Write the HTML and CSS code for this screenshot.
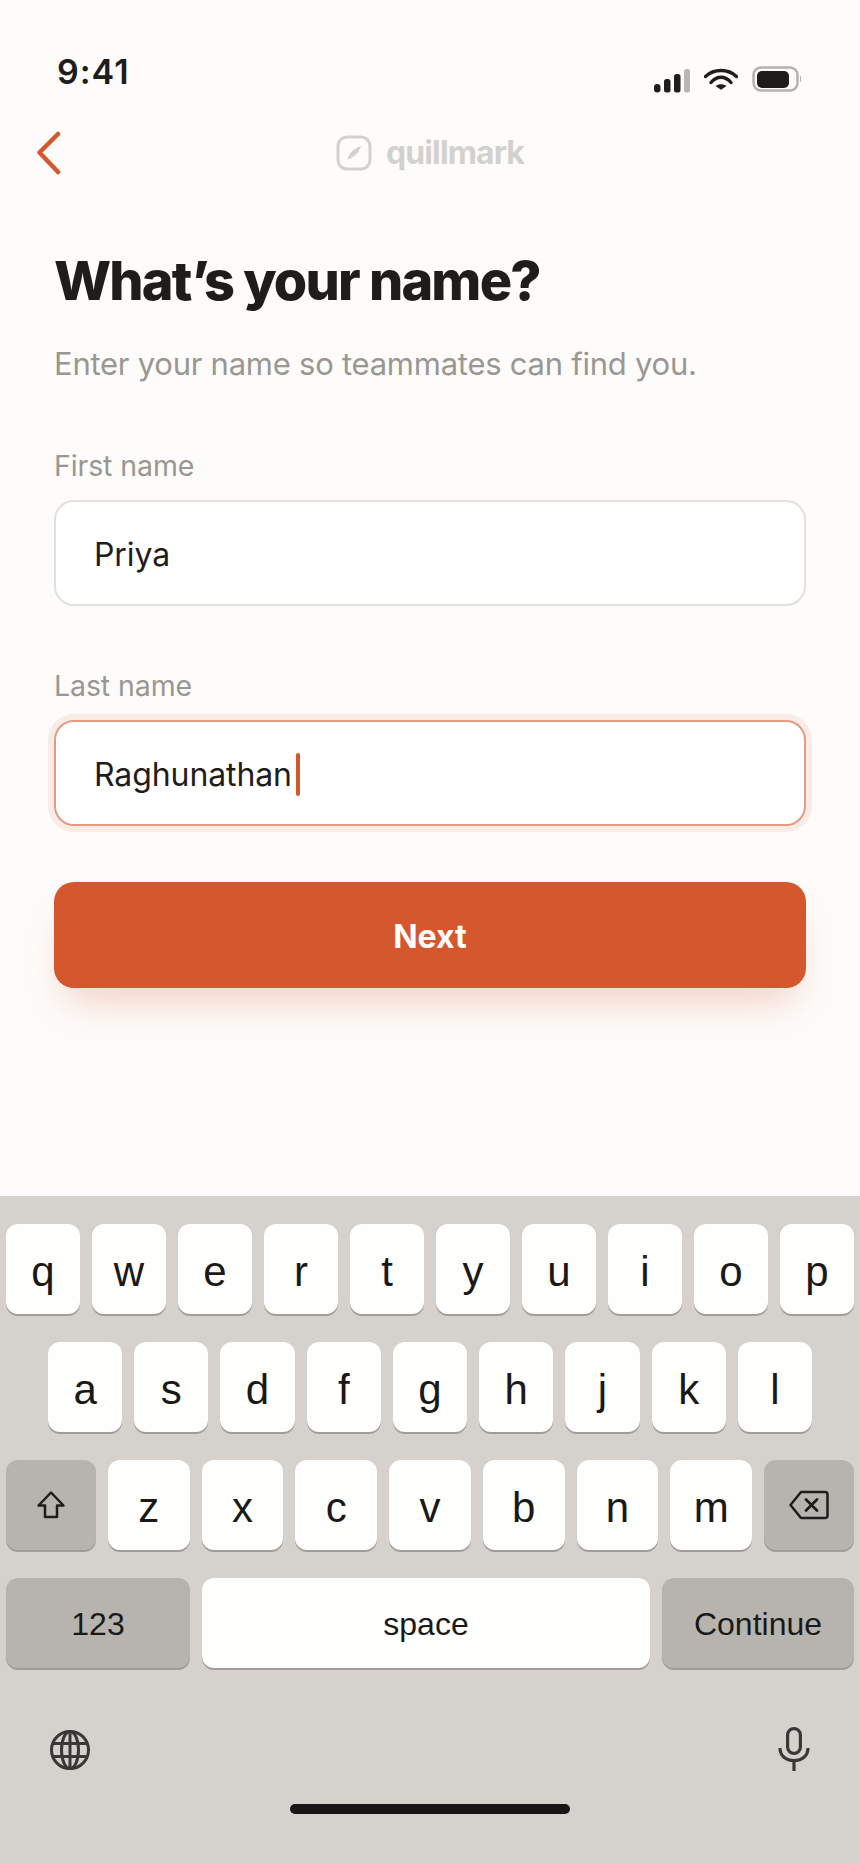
FILE: index.html
```html
<!DOCTYPE html>
<html lang="en">
<head>
    <meta charset="UTF-8">
    <meta name="viewport" content="width=device-width, initial-scale=1.0">
    <title>quillmark - What's your name?</title>
    <link rel="stylesheet" href="styles.css">
</head>
<body>
    <div class="screen">
        <div class="status-bar">
            <span class="time">9:41</span>
            <div class="status-icons">
                <svg width="36" height="24" viewBox="0 0 36 24">
                    <rect x="0" y="15" width="6.5" height="8.5" rx="3.2" fill="#1f1d1b"/>
                    <rect x="10" y="10" width="6.5" height="13.5" rx="2.5" fill="#1f1d1b"/>
                    <rect x="20" y="5" width="6.5" height="18.5" rx="2.5" fill="#1f1d1b"/>
                    <rect x="30" y="0" width="6" height="23.5" rx="2.5" fill="#b8b6b3"/>
                </svg>
                <svg class="wifi" width="34" height="22" viewBox="0 0 34 22">
                    <path d="M1.5 8.5C10 .5 24 .5 32.500 8.500" fill="none" stroke="#1f1d1b" stroke-width="3.400" stroke-linecap="round"/>
                    <path d="M7 14.500C13 7.500 21 7.500 27 14.500" fill="none" stroke="#1f1d1b" stroke-width="3.400" stroke-linecap="round"/>
                    <path d="M11.500 18C15 15.500 19 15.500 22.500 18L17 21.800Z" fill="#1f1d1b"/>
                </svg>
                <svg class="battery" width="50" height="26" viewBox="0 0 50 26">
                    <rect x="1.500" y="1.500" width="44" height="23" rx="7.500" fill="none" stroke="#b5b3b0" stroke-width="2.500"/>
                    <rect x="5" y="5" width="32" height="17" rx="5" fill="#1f1d1b"/>
                    <path d="M48 9.500C49.500 10.500 49.500 15.500 48 16.500Z" fill="#b5b3b0"/>
                </svg>
            </div>
        </div>

        <div class="nav">
            <button class="back" aria-label="Back">
                <svg width="24" height="44" viewBox="0 0 24 44">
                    <path d="M21 3L2.500 21.500L21 41" fill="none" stroke="#d4572d" stroke-width="4.500" stroke-linecap="round" stroke-linejoin="round"/>
                </svg>
            </button>
            <div class="brand">
                <svg width="36" height="36" viewBox="0 0 36 36">
                    <rect x="2" y="2" width="32" height="32" rx="9" fill="none" stroke="#d3d1ce" stroke-width="3"/>
                    <path d="M11.500 24.500C13 18 17.500 13.500 25 11C23.500 17 19 22 11.500 24.500Z" fill="#d3d1ce"/>
                </svg>
                <span>quillmark</span>
            </div>
        </div>

        <div class="content">
            <h1>What’s your name?</h1>
            <p class="subtitle">Enter your name so teammates can find you.</p>

            <div class="label">First name</div>
            <div class="field">Priya</div>

            <div class="label label-second">Last name</div>
            <div class="field field-focus">Raghunathan<span class="caret"></span></div>

            <button class="next">Next</button>
        </div>

        <div class="keyboard">
            <div class="key-row">
                <div class="key">q</div>
                <div class="key">w</div>
                <div class="key">e</div>
                <div class="key">r</div>
                <div class="key">t</div>
                <div class="key">y</div>
                <div class="key">u</div>
                <div class="key">i</div>
                <div class="key">o</div>
                <div class="key">p</div>
            </div>
            <div class="key-row key-row-mid">
                <div class="key">a</div>
                <div class="key">s</div>
                <div class="key">d</div>
                <div class="key">f</div>
                <div class="key">g</div>
                <div class="key">h</div>
                <div class="key">j</div>
                <div class="key">k</div>
                <div class="key">l</div>
            </div>
            <div class="key-row">
                <div class="key key-dark key-shift">
                    <svg width="30" height="30" viewBox="0 0 30 30">
                        <path d="M15 2.500L2.500 15.500H9V27H21V15.500H27.500Z" fill="none" stroke="#1f1d1b" stroke-width="2.500" stroke-linejoin="round"/>
                    </svg>
                </div>
                <div class="key">z</div>
                <div class="key">x</div>
                <div class="key">c</div>
                <div class="key">v</div>
                <div class="key">b</div>
                <div class="key">n</div>
                <div class="key">m</div>
                <div class="key key-dark key-shift">
                    <svg width="40" height="30" viewBox="0 0 40 30">
                        <path d="M12 2H36C37.500 2 38.500 3 38.500 4.500V25.500C38.500 27 37.500 28 36 28H12L1.500 15Z" fill="none" stroke="#1f1d1b" stroke-width="2.500" stroke-linejoin="round"/>
                        <path d="M17 9.500L28 20.500M28 9.500L17 20.500" fill="none" stroke="#1f1d1b" stroke-width="2.800" stroke-linecap="round"/>
                    </svg>
                </div>
            </div>
            <div class="key-row">
                <div class="key key-dark key-small key-123">123</div>
                <div class="key key-small key-space">space</div>
                <div class="key key-dark key-small key-continue">Continue</div>
            </div>
            <div class="key-extras">
                <svg width="42" height="42" viewBox="0 0 42 42">
                    <g fill="none" stroke="#3a3836" stroke-width="3">
                        <circle cx="21" cy="21" r="18.500"/>
                        <ellipse cx="21" cy="21" rx="8.500" ry="18.500"/>
                        <path d="M21 2.500V39.500M3.500 14.500H38.500M3.500 27.500H38.500"/>
                    </g>
                </svg>
                <svg class="mic" width="36" height="46" viewBox="0 0 36 46">
                    <g fill="none" stroke="#3a3836" stroke-width="3.200">
                        <rect x="11.600" y="1.600" width="12.800" height="24.800" rx="6.400"/>
                        <path d="M4 21C4 29 10 33.500 18 33.500C26 33.500 32 29 32 21M18 33.500V44"/>
                    </g>
                </svg>
            </div>
            <div class="home-bar"></div>
        </div>
    </div>
</body>
</html>
```

FILE: styles.css
```css
* {
    box-sizing: border-box;
}
body {
    margin: 0;
    font-family: Inter, "Liberation Sans", sans-serif;
    background-color: #fdfcfa;
    color: #1f1d1b;
}
.screen {
    width: 860px;
    height: 1864px;
    display: flex;
    flex-direction: column;
    overflow: hidden;
}
.status-bar {
    height: 110px;
    display: flex;
    justify-content: space-between;
    padding: 50px 58px 0 57px;
}
.time {
    font-size: 34px;
    font-weight: 600;
    line-height: 44px;
    letter-spacing: 1px;
}
.status-icons {
    display: flex;
    align-items: flex-end;
    gap: 14px;
    height: 43px;
}
.wifi {
    margin-bottom: 3px;
}
.battery {
    margin-bottom: 1px;
}
.nav {
    display: grid;
    grid-template-columns: 1fr auto 1fr;
    align-items: center;
    height: 86px;
    padding-left: 37px;
    padding-right: 36px;
}
.back {
    justify-self: start;
    display: flex;
    padding: 0;
    background: none;
    border: none;
}
.brand {
    display: flex;
    align-items: center;
    gap: 14px;
    margin-left: -1px;
    margin-top: -1px;
    color: #d3d1ce;
    font-size: 32px;
    font-weight: 700;
    letter-spacing: -0.9px;
}
.content {
    padding: 53px 54px 0;
}
h1 {
    margin: 0;
    font-size: 54px;
    font-weight: 800;
    line-height: 64px;
    letter-spacing: -1.8px;
}
.subtitle {
    margin: 31px 0 0;
    font-size: 31px;
    line-height: 40px;
    letter-spacing: -0.25px;
    color: #9a9792;
}
.label {
    margin-top: 64px;
    font-size: 28.500px;
    line-height: 36px;
    letter-spacing: -0.1px;
    color: #9a9792;
}
.label-second {
    margin-top: 62px;
}
.field {
    display: flex;
    align-items: center;
    height: 106px;
    margin-top: 16px;
    padding: 2px 0 0 38px;
    background-color: #fff;
    border: 2px solid #e2e1de;
    border-radius: 20px;
    font-size: 32px;
    letter-spacing: -0.1px;
}
.field-focus {
    border-color: #e39c84;
    box-shadow: 0 0 0 6px #f9ece6;
}
.caret {
    width: 4px;
    height: 43px;
    margin-left: 4px;
    background-color: #d4572d;
    border-radius: 2px;
}
.next {
    display: block;
    width: 100%;
    height: 106px;
    margin-top: 56px;
    padding-top: 3px;
    background-color: #d4572d;
    color: #fff;
    border: none;
    border-radius: 20px;
    font-family: inherit;
    font-size: 32px;
    font-weight: 700;
    box-shadow: 0 24px 40px -12px rgba(212, 87, 45, 0.28);
}
.keyboard {
    margin-top: auto;
    height: 668px;
    padding: 28px 6px 0;
    background-color: #d5d2ce;
    font-family: "Liberation Sans", Arial, sans-serif;
}
.key-row {
    display: flex;
    gap: 12px;
    margin-bottom: 28px;
}
.key-row-mid {
    padding: 0 42px;
}
.key {
    flex: 1;
    display: flex;
    align-items: center;
    justify-content: center;
    height: 90px;
    background-color: #fefefd;
    border-radius: 12px;
    box-shadow: 0 2px 0 #a09d99;
    font-size: 42px;
    padding-top: 6px;
    color: #1a1917;
}
.key-dark {
    background-color: #b7b4b0;
}
.key-shift {
    flex: 0 0 90px;
    padding-top: 0;
}
.key-small {
    font-size: 32px;
    padding-top: 2px;
}
.key-123 {
    flex: 0 0 184px;
}
.key-continue {
    flex: 0 0 192px;
}
.key-extras {
    display: flex;
    justify-content: space-between;
    padding: 33px 42px 0 43px;
}
.mic {
    margin-top: -2px;
}
.home-bar {
    width: 280px;
    height: 10px;
    margin: 31px auto 0;
    background-color: #171614;
    border-radius: 5px;
}
```
